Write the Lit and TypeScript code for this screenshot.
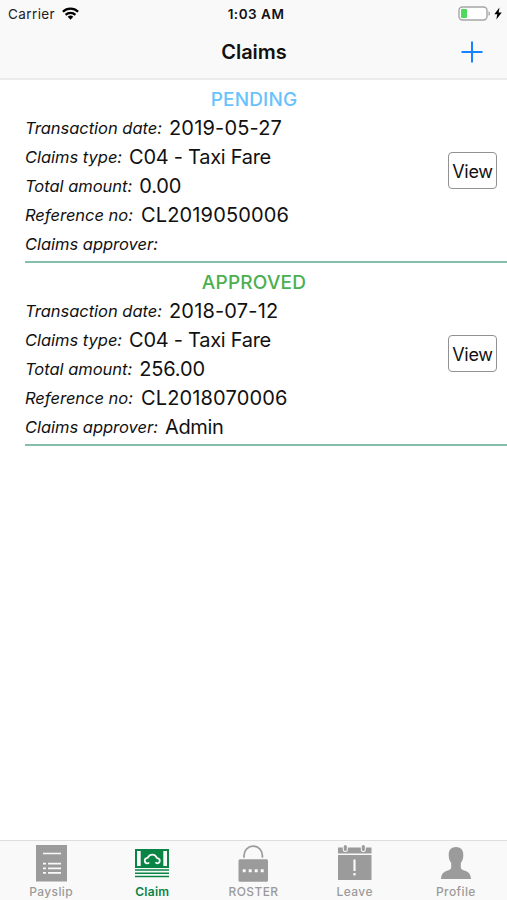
import { LitElement, html, svg, css, nothing } from "lit";
import { customElement, property } from "lit/decorators.js";

interface Claim {
  status: "pending" | "approved";
  fields: [string, string, string][];
}

const claims: Claim[] = [
  {
    status: "pending",
    fields: [
      ["date", "Transaction date:", "2019-05-27"],
      ["type", "Claims type:", "C04 - Taxi Fare"],
      ["amount", "Total amount:", "0.00"],
      ["reference", "Reference no:", "CL2019050006"],
      ["approver", "Claims approver:", ""],
    ],
  },
  {
    status: "approved",
    fields: [
      ["date", "Transaction date:", "2018-07-12"],
      ["type", "Claims type:", "C04 - Taxi Fare"],
      ["amount", "Total amount:", "256.00"],
      ["reference", "Reference no:", "CL2018070006"],
      ["approver", "Claims approver:", "Admin"],
    ],
  },
];

const icons = {
  payslip: svg`<path fill="currentColor" d="M5 1h31v36.500H5z"/><path d="M12 9.500h18M17 19.700h13M17 24.300h13M17 28.900h13M12 19.700h3M12 24.300h3M12 28.900h3" stroke="#f9f9f9" stroke-width="1.700"/>`,
  claim: svg`<path fill="currentColor" d="M3 5h34v19H3z"/><path fill="#f9f9f9" d="M5 7h3.700v15H5zM31.300 7H35v15h-3.700z"/><path d="M17 18.300q-.5 1-1.700 1h-.3a2.600 2.600 0 0 1-.3-5.100q1.200-.2 1.500-1.200a4.600 4.600 0 0 1 8.200.1q.4 1.100 1.500 1.300a2.500 2.500 0 0 1-.4 4.900q-1.400 0-2-1" fill="none" stroke="#f9f9f9" stroke-width="1.800"/><path d="M3 26h34M3 29.300h34M3 32.600h34" stroke="currentColor" stroke-width="1.500"/>`,
  roster: svg`<path d="M11 13.800v-2.500a9.200 9.200 0 0 1 18.400 0v2.500" fill="none" stroke="currentColor" stroke-width="1.700"/><rect x="5.500" y="15.300" width="29.500" height="22.500" rx="1.500" fill="currentColor"/><path fill="#f9f9f9" d="M9.700 25.300h3v3h-3zM15.700 25.300h3v3h-3zM21.700 25.300h3v3h-3zM27.700 25.300h3v3h-3z"/>`,
  leave: svg`<path fill="currentColor" d="M3 3.500h33.500v6H3zM3 11h33.500v25H3z"/><g fill="#f9f9f9"><rect x="7.800" y=".5" width="5" height="7.500" rx="2.500"/><rect x="25.800" y=".5" width="5" height="7.500" rx="2.500"/></g><g fill="currentColor"><rect x="8.800" y="1" width="3" height="6" rx="1.500"/><rect x="26.800" y="1" width="3" height="6" rx="1.500"/></g><path d="M19.500 15.500v11.500M19.500 29v2.500" stroke="#f9f9f9" stroke-width="2.200"/>`,
  profile: svg`<path fill="currentColor" d="M20 3c4.700 0 7.300 3 7.300 7.700 0 3.400-.8 6.200-2.500 8.300v4.500c0 2 2 2.500 4.200 3.200 4 1.400 5.500 3.300 6 8.300H5c.5-5 2-6.900 6-8.300 2.200-.7 4.200-1.200 4.200-3.200V19c-1.700-2.100-2.500-4.900-2.500-8.300C12.700 6 15.300 3 20 3z"/>`,
};

const tabs: { id: keyof typeof icons; label: string }[] = [
  { id: "payslip", label: "Payslip" },
  { id: "claim", label: "Claim" },
  { id: "roster", label: "ROSTER" },
  { id: "leave", label: "Leave" },
  { id: "profile", label: "Profile" },
];

@customElement("status-bar")
class StatusBar extends LitElement {
  static styles = css`
    :host { display: grid; grid-template-columns: 1fr auto 1fr; align-items: center; height: 27px; padding: 0 5px 0 8px; font-size: 13.500px; }
    .side { display: flex; align-items: center; gap: 7px; color: #222; letter-spacing: 0.4px; }
    .time { font-weight: 600; letter-spacing: 0.5px; padding-left: 2px; }
    .power { justify-content: flex-end; gap: 3px; }
    svg { display: block; }
  `;
  render() {
    return html`
      <div class="side">
        <span>Carrier</span>
        <svg width="17" height="13" viewBox="0 0 17 13">
          <g fill="none" stroke="#000" stroke-width="2.300">
            <path d="M.9 4.700a10.800 10.800 0 0 1 15.200 0M3.600 7.900a7 7 0 0 1 9.800 0"/>
          </g>
          <path d="M5.700 9.800a4 4 0 0 1 5.600 0L8.500 12.700z"/>
        </svg>
      </div>
      <span class="time">1:03 AM</span>
      <div class="side power">
        <svg width="33" height="15" viewBox="0 0 33 15">
          <rect x="1" y="1" width="28" height="13" rx="3.500" fill="#fff" stroke="#a6a6a6" stroke-width="1.400"/>
          <rect x="3" y="3" width="6" height="9" rx="1" fill="#4cd95c"/>
          <path d="M30.500 5.200c2 .8 2 3.800 0 4.600z" fill="#a6a6a6"/>
        </svg>
        <svg width="8" height="13" viewBox="0 0 8 13"><path d="M5.500.5.300 7.200h3L2.300 12.500 7.800 5.500H4.600z"/></svg>
      </div>`;
  }
}

@customElement("claim-item")
class ClaimItem extends LitElement {
  @property({ attribute: false }) claim!: Claim;
  static styles = css`
    :host { display: grid; grid-template-columns: 1fr auto; grid-template-rows: 29px 145px; padding: 5px 0 2px; margin-left: 25px; border-bottom: 2px solid #85bfa9; }
    .status { grid-column: 1 / -1; text-align: center; margin-left: -25px; line-height: 29px; font-size: 19px; font-weight: 500; padding-left: 1px; }
    .pending { color: #69c2fb; letter-spacing: 0.15px; }
    .approved { color: #4caf50; letter-spacing: 0.2px; }
    .row { display: flex; align-items: center; gap: 7px; height: 29px; line-height: 29px; white-space: nowrap; }
    .label { padding-bottom: 1px; line-height: 27px; font-size: 16.500px; font-style: italic; letter-spacing: -0.02px; }
    .value { font-size: 20px; }
    .date .value { letter-spacing: 0.18px; }
    .type .value { letter-spacing: -0.28px; }
    .amount .value { letter-spacing: -0.15px; }
    .reference .value { letter-spacing: 0.15px; padding-left: 1px; }
    .approver .value { letter-spacing: -0.35px; }
    .view { box-sizing: border-box; align-self: start; width: 49px; height: 37px; margin: 38px 10px 0 0; padding: 2px 0 0; border: 1.500px solid #929292; border-radius: 4px; background: #fff; color: #111; font: 18px/34px Inter, sans-serif; letter-spacing: -0.3px; text-align: center; }
  `;
  render() {
    const { status, fields } = this.claim;
    return html`
      <div class="status ${status}">${status.toUpperCase()}</div>
      <div>
        ${fields.map(([key, label, value]) => html`
          <div class="row ${key}"><span class="label">${label}</span>${value ? html`<span class="value">${value}</span>` : nothing}</div>`)}
      </div>
      <button class="view">View</button>`;
  }
}

@customElement("app-root")
class AppRoot extends LitElement {
  static styles = css`
    :host { display: flex; flex-direction: column; box-sizing: border-box; height: 100vh; overflow: hidden; background: #fff; color: #111; font-family: Inter, sans-serif; }
    header { box-sizing: border-box; height: 80px; flex: none; background: #f9f9f9; border-bottom: 2px solid #ececec; }
    .nav { display: grid; grid-template-columns: 1fr auto 1fr; align-items: center; height: 50px; padding: 0 24px; }
    h1 { grid-column: 2; margin: 0; padding-left: 1px; font-size: 20px; font-weight: 600; letter-spacing: 0; }
    .add { justify-self: end; display: block; }
    main { flex: 1; }
    nav { display: grid; grid-template-columns: repeat(5, 1fr); box-sizing: border-box; height: 60px; border-top: 1px solid #dedede; background: #f9f9f9; padding-left: 1px; }
    .tab { display: flex; flex-direction: column; align-items: center; padding-top: 3px; color: #9b9b9b; font-size: 12px; font-weight: 500; line-height: 16px; letter-spacing: 0.4px; }
    .tab svg { display: block; }
    .tab span { padding-right: 1px; }
    .active { color: #098445; font-weight: 600; letter-spacing: 0.3px; }
  `;
  render() {
    return html`
      <header>
        <status-bar></status-bar>
        <div class="nav">
          <h1>Claims</h1>
          <svg class="add" width="22" height="22" viewBox="0 0 22 22"><path d="M11 .5v21M.5 11h21" stroke="#1583ff" stroke-width="2"/></svg>
        </div>
      </header>
      <main>${claims.map((claim) => html`<claim-item .claim=${claim}></claim-item>`)}</main>
      <nav>
        ${tabs.map(({ id, label }) => html`
          <div class="tab ${id === "claim" ? "active" : ""}">
            <svg width="41" height="40" viewBox="0 0 41 40">${icons[id]}</svg>
            <span>${label}</span>
          </div>`)}
      </nav>`;
  }
}
